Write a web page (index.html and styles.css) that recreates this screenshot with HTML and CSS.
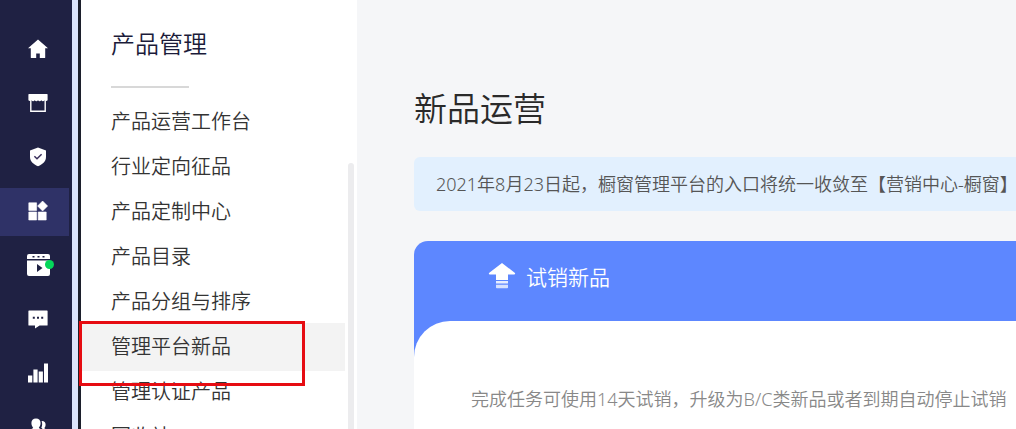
FILE: index.html
```html
<!DOCTYPE html>
<html lang="zh-CN">
<head>
    <meta charset="UTF-8">
    <meta name="viewport" content="width=device-width, initial-scale=1.0">
    <title>新品运营</title>

    <link rel="stylesheet" href="styles.css">

</head>
<body>

    <div class="page">

        <nav class="rail">
            <a href="#" aria-label="首页">
                <svg width="20" height="20" viewBox="0 0 20 20"><path d="M10 .6L0 9.200h2.800V18.400q0 .6.6.6H8.200V14.500h3.600V19h4.800q.6 0 .6-.6V9.200H20z" fill="#fff"/></svg>
            </a>
            <a href="#" aria-label="店铺">
                <svg width="20" height="20" viewBox="0 0 20 20"><path d="M1 1h18q.6 0 .6.6V7.200q-1.400 1.400-3 0q-1.800 2-3.300 0q-1.600 2-3.300 0q-1.600 2-3.300 0q-1.500 2-3.300 0q-1.600 1.400-3 0V1.600Q.4 1 1 1z" fill="#fff"/><path d="M2.800 7V18.300H17.200V7" fill="none" stroke="#fff" stroke-width="1.400"/></svg>
            </a>
            <a href="#" aria-label="安全">
                <svg width="20" height="20" viewBox="0 0 20 20"><path d="M10 .6L2 3.400V10c0 4.200 3.200 7.400 8 9.200 4.800-1.800 8-5 8-9.200V3.400z" fill="#fff"/><path d="M6.400 9.300l2.600 2.500 4.600-4.500" fill="none" stroke="#3a2f5c" stroke-width="1.500"/></svg>
            </a>
            <a class="active" href="#" aria-label="产品管理">
                <svg width="20" height="20" viewBox="0 0 20 20"><path d="M.8 1.800h7.800v7.600H.8zM.8 11h7.800v8H.8zM10.200 11h8v8h-8zM14.600 0l5 5-5 5-5-5z" fill="#fff" stroke="#fff" stroke-width=".6" stroke-linejoin="round"/></svg>
            </a>
            <a class="video" href="#" aria-label="视频">
                <svg width="28" height="24" viewBox="0 0 28 24"><path d="M3 1H22q2 0 2 2V6H1V3q0-2 2-2zM1 7.400H24V21q0 2-2 2H3q-2 0-2-2z" fill="#fff"/><path d="M6.500 3h2v1.600h-2zM11.500 3h2v1.600h-2zM16.500 3h2v1.600h-2zM11 11l5.500 4L11 19z" fill="#1f2143"/><circle cx="23.500" cy="11.500" r="4.500" fill="#04d75a"/></svg>
            </a>
            <a href="#" aria-label="消息">
                <svg width="20" height="20" viewBox="0 0 20 20"><path d="M1 1.500H19q.6 0 .6.6V15.900q0 .6-.6.6H11.600L7 19.600V16.500H1q-.6 0-.6-.6V2.100Q.4 1.500 1 1.500z" fill="#fff"/><path d="M4.800 7.800h2v2h-2zM9 7.800h2v2H9zM13.200 7.800h2v2h-2z" fill="#1f2143"/></svg>
            </a>
            <a href="#" aria-label="数据">
                <svg width="20" height="20" viewBox="0 0 20 20"><path d="M0 12.500h4.300V19.500H0zM5.400 6.500h4.200v13H5.400zM10.700 8.500h4.200v11h-4.200zM16 .5h4.200v19H16z" fill="#fff"/></svg>
            </a>
            <a href="#" aria-label="客户">
                <svg width="20" height="20" viewBox="0 0 20 20"><path d="M8 1.500c3 0 4.600 2 4.600 4.600 0 2-.8 3.600-1.800 4.900 2.500 1 4.200 3.500 4.200 8H1c0-4.500 1.700-7 4.200-8-1-1.300-1.800-2.900-1.800-4.900C3.400 3.500 5 1.500 8 1.500z" fill="#fff"/><path d="M14.200 4c2 0 3.400 1.300 3.400 3.500 0 1.700-.6 2.800-1.400 3.700 2 1 3.300 3.300 3.300 7.800h-3c0-3.500-1-6.500-3.200-8.300 1-1.700 1.200-4 .3-6.700z" fill="#fff"/></svg>
            </a>
        </nav>

        <aside class="side">
            <h2>产品管理</h2>
            <ul>
                <li><a href="#">产品运营工作台</a></li>
                <li><a href="#">行业定向征品</a></li>
                <li><a href="#">产品定制中心</a></li>
                <li><a href="#">产品目录</a></li>
                <li><a href="#">产品分组与排序</a></li>
                <li class="active"><a href="#">管理平台新品</a></li>
                <li><a href="#">管理认证产品</a></li>
                <li><a href="#">回收站</a></li>
            </ul>
            <div class="thumb"></div>
        </aside>

        <main>
            <h1>新品运营</h1>
            <p class="notice">2021年8月23日起，橱窗管理平台的入口将统一收敛至【营销中心-橱窗】</p>

            <section class="card">
                <h3>
                    <svg width="28" height="26" viewBox="0 0 28 26"><path d="M14 0L27 10q.6 1.500-1 1.500H20V17H8V11.500H2q-1.600 0-1-1.500z" fill="#fff"/><path d="M8 18h12v2.600H8z" fill="#fff" opacity=".85"/><path d="M8 21.800h12V24.500q0 .8-.8.8H8.800q-.8 0-.8-.8z" fill="#fff" opacity=".75"/></svg>
                    试销新品
                </h3>
                <div class="card-body">
                    <p>完成任务可使用14天试销，升级为B/C类新品或者到期自动停止试销</p>
                </div>
            </section>
        </main>

    </div>

</body>
</html>
```

FILE: styles.css
```css
*,
*::before,
*::after
{
    margin: 0;
    padding: 0;
    box-sizing: border-box;
}

body
{
    font-family: "Noto Sans", "Noto Sans CJK SC", sans-serif;
    font-weight: 350;
    background: #f5f6f8;
}

a
{
    color: inherit;
    text-decoration: none;
}

.page
{
    display: flex;
    height: 100vh;
    overflow: hidden;
}

.rail
{
    flex: 0 0 78px;
    display: flex;
    flex-direction: column;
    gap: 6px;
    padding: 26px 3px 0 0;
    background: #1f2143;
    border-right: 6px solid #dbe3fb;
}

.rail a
{
    flex: 0 0 48px;
    display: flex;
    align-items: center;
    padding: 0 0 2px 28px;
}

.rail .video
{
    padding-left: 26px;
}

.rail .active
{
    background: #2f3267;
}

.side
{
    position: relative;
    flex: 0 0 279px;
    padding: 24px 12px 0 0;
    border-left: 3px solid #1c1f2c;
    background: #fff;
}

.side h2
{
    margin-left: 30px;
    font-size: 24px;
    line-height: 40px;
    font-weight: 350;
    color: #1b1b3a;
}

.side h2::after
{
    content: '';
    display: block;
    width: 78px;
    height: 2px;
    margin-top: 22px;
    background: #d8d8d8;
}

.side ul
{
    list-style: none;
    margin-top: 11px;
}

.side li
{
    position: relative;
    display: flex;
    align-items: center;
    height: 45px;
}

.side li a
{
    flex: 1 0 auto;
    padding-left: 30px;
    font-size: 20px;
    line-height: 48px;
    color: #333;
}

.side .active a
{
    background: #f3f3f3;
}

/* red frame over the current item */
.side .active::after
{
    content: '';
    position: absolute;
    z-index: 1;
    left: -2px;
    top: -3px;
    width: 226px;
    height: 65px;
    border: 3px solid #e60c12;
}

.thumb
{
    position: absolute;
    right: 3px;
    top: 163px;
    bottom: 0;
    width: 6px;
    border-radius: 3px 3px 0 0;
    background: #ececee;
}

main
{
    flex: 1;
    min-width: 0;
    display: flex;
    flex-direction: column;
    padding: 84px 0 0 57px;
    white-space: nowrap;
}

h1
{
    font-size: 33px;
    line-height: 50px;
    font-weight: 350;
    color: #2a2a2a;
}

.notice
{
    margin-top: 23px;
    padding-left: 22px;
    border-radius: 6px 0 0 6px;
    font-size: 18px;
    line-height: 54px;
    color: #555;
    background: #e2f0fe;
}

.card
{
    flex: 1;
    display: flex;
    flex-direction: column;
    margin-top: 30px;
    overflow: hidden;
    border-radius: 14px 0 0 0;
    background: #5d87ff;
}

.card h3
{
    display: flex;
    align-items: center;
    gap: 10px;
    height: 80px;
    padding: 0 0 10px 74px;
    font-size: 21px;
    font-weight: 350;
    color: #fff;
}

.card-body
{
    flex: 1;
    padding: 64px 0 0 57px;
    border-radius: 36px 0 0 0;
    font-size: 18px;
    line-height: 28px;
    color: #888;
    background: #fff;
}
```
